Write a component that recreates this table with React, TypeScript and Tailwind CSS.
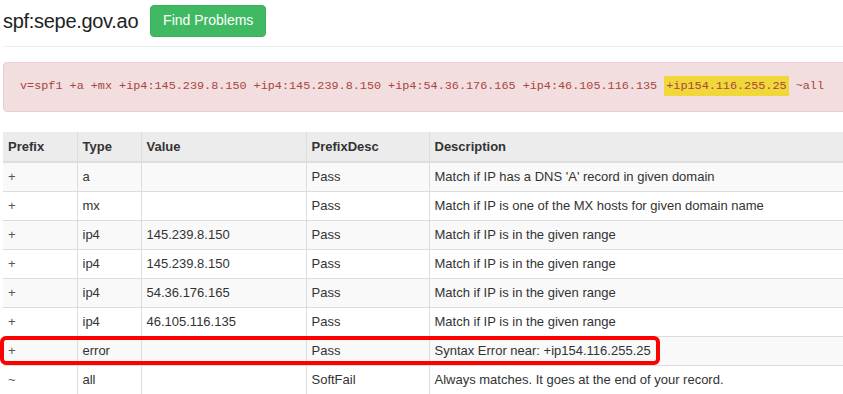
import React from "react";

const rows: [string, string, string, string, string][] = [
  ["+", "a", "", "Pass", "Match if IP has a DNS 'A' record in given domain"],
  ["+", "mx", "", "Pass", "Match if IP is one of the MX hosts for given domain name"],
  ["+", "ip4", "145.239.8.150", "Pass", "Match if IP is in the given range"],
  ["+", "ip4", "145.239.8.150", "Pass", "Match if IP is in the given range"],
  ["+", "ip4", "54.36.176.165", "Pass", "Match if IP is in the given range"],
  ["+", "ip4", "46.105.116.135", "Pass", "Match if IP is in the given range"],
  ["+", "error", "", "Pass", "Syntax Error near: +ip154.116.255.25"],
  ["~", "all", "", "SoftFail", "Always matches. It goes at the end of your record."],
];

export default function App() {
  return (
    <div
      className="w-[843px] h-[394px] overflow-hidden bg-white text-[#333] relative"
      style={{ fontFamily: '"Liberation Sans", Arial, sans-serif' }}
    >
      <div className="w-[880px] pl-[3px]">
        <div className="flex items-center h-[40px] pt-[1px]">
          <div className="text-[20px] leading-none text-[#222] tracking-[-0.3px]">spf:sepe.gov.ao</div>
          <button className="ml-[12px] h-[32px] w-[116px] rounded-[4px] bg-[#40ba62] text-white text-[14px] border border-[#3aae59]">
            Find Problems
          </button>
        </div>
        <div className="h-[1px] bg-[#eee] mt-[6px]" />
        <div className="mt-[15px] h-[50px] rounded-[4px] bg-[#f2dede] border border-[#ebccd1] flex items-center pl-[16px]">
          <span
            className="text-[11.8px] text-[#a94442] whitespace-pre"
            style={{ fontFamily: '"Liberation Mono", "DejaVu Sans Mono", monospace' }}
          >
            v=spf1 +a +mx +ip4:145.239.8.150 +ip4:145.239.8.150 +ip4:54.36.176.165 +ip4:46.105.116.135{" "}
            <span className="bg-[#f0d83a] px-[2px] py-[3px]">+ip154.116.255.25</span> ~all
          </span>
        </div>
        <table className="mt-[20px] w-[880px] border-collapse text-[13px]">
          <thead>
            <tr className="bg-[#ececec]">
              <th className="text-left font-bold h-[30px] px-[5px] w-[74px] border-b-2 border-[#ddd] border-r">Prefix</th>
              <th className="text-left font-bold h-[30px] px-[5px] w-[64px] border-b-2 border-[#ddd] border-r">Type</th>
              <th className="text-left font-bold h-[30px] px-[5px] w-[165px] border-b-2 border-[#ddd] border-r">Value</th>
              <th className="text-left font-bold h-[30px] px-[5px] w-[123px] border-b-2 border-[#ddd] border-r">PrefixDesc</th>
              <th className="text-left font-bold h-[30px] px-[5px] border-b-2 border-[#ddd]">Description</th>
            </tr>
          </thead>
          <tbody>
            {rows.map((r, i) => (
              <tr key={i} className={i % 2 === 0 ? "bg-[#f9f9f9]" : "bg-white"}>
                {r.map((c, j) => (
                  <td
                    key={j}
                    className={
                      "h-[29px] px-[5px] border-b border-[#ddd] " +
                      (j < 4 ? "border-r " : "") +
                      (j === 0 ? "text-[#555]" : "")
                    }
                  >
                    {c}
                  </td>
                ))}
              </tr>
            ))}
          </tbody>
        </table>
      </div>
      <div className="absolute left-0 top-[336px] w-[660px] h-[29px] border-[4px] border-[#f00] rounded-[6px]" />
    </div>
  );
}
